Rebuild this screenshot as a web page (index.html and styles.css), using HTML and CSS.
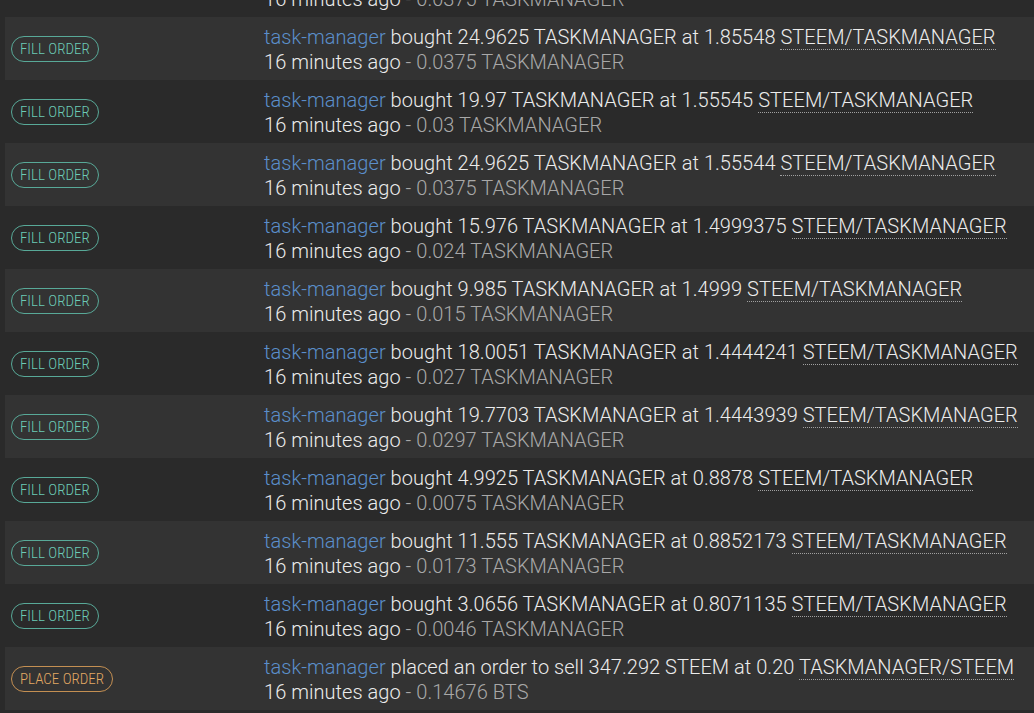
FILE: index.html
```html
<!DOCTYPE html>
<html lang="en">
<head>
    <meta charset="UTF-8">
    <meta name="viewport" content="width=device-width, initial-scale=1.0">
    <title>Recent activity</title>
    <link rel="stylesheet" href="styles.css">
</head>
<body>
    <div class="activity">
        <div class="row">
            <div class="type"><span class="badge fill">Fill order</span></div>
            <div class="info">
                <div><a class="account">task-manager</a> bought 24.9625 TASKMANAGER at 1.85548 <span class="pair">STEEM/TASKMANAGER</span></div>
                <div>16 minutes ago <span class="fee">- 0.0375 TASKMANAGER</span></div>
            </div>
        </div>
        <div class="row">
            <div class="type"><span class="badge fill">Fill order</span></div>
            <div class="info">
                <div><a class="account">task-manager</a> bought 24.9625 TASKMANAGER at 1.85548 <span class="pair">STEEM/TASKMANAGER</span></div>
                <div>16 minutes ago <span class="fee">- 0.0375 TASKMANAGER</span></div>
            </div>
        </div>
        <div class="row">
            <div class="type"><span class="badge fill">Fill order</span></div>
            <div class="info">
                <div><a class="account">task-manager</a> bought 19.97 TASKMANAGER at 1.55545 <span class="pair">STEEM/TASKMANAGER</span></div>
                <div>16 minutes ago <span class="fee">- 0.03 TASKMANAGER</span></div>
            </div>
        </div>
        <div class="row">
            <div class="type"><span class="badge fill">Fill order</span></div>
            <div class="info">
                <div><a class="account">task-manager</a> bought 24.9625 TASKMANAGER at 1.55544 <span class="pair">STEEM/TASKMANAGER</span></div>
                <div>16 minutes ago <span class="fee">- 0.0375 TASKMANAGER</span></div>
            </div>
        </div>
        <div class="row">
            <div class="type"><span class="badge fill">Fill order</span></div>
            <div class="info">
                <div><a class="account">task-manager</a> bought 15.976 TASKMANAGER at 1.4999375 <span class="pair">STEEM/TASKMANAGER</span></div>
                <div>16 minutes ago <span class="fee">- 0.024 TASKMANAGER</span></div>
            </div>
        </div>
        <div class="row">
            <div class="type"><span class="badge fill">Fill order</span></div>
            <div class="info">
                <div><a class="account">task-manager</a> bought 9.985 TASKMANAGER at 1.4999 <span class="pair">STEEM/TASKMANAGER</span></div>
                <div>16 minutes ago <span class="fee">- 0.015 TASKMANAGER</span></div>
            </div>
        </div>
        <div class="row">
            <div class="type"><span class="badge fill">Fill order</span></div>
            <div class="info">
                <div><a class="account">task-manager</a> bought 18.0051 TASKMANAGER at 1.4444241 <span class="pair">STEEM/TASKMANAGER</span></div>
                <div>16 minutes ago <span class="fee">- 0.027 TASKMANAGER</span></div>
            </div>
        </div>
        <div class="row">
            <div class="type"><span class="badge fill">Fill order</span></div>
            <div class="info">
                <div><a class="account">task-manager</a> bought 19.7703 TASKMANAGER at 1.4443939 <span class="pair">STEEM/TASKMANAGER</span></div>
                <div>16 minutes ago <span class="fee">- 0.0297 TASKMANAGER</span></div>
            </div>
        </div>
        <div class="row">
            <div class="type"><span class="badge fill">Fill order</span></div>
            <div class="info">
                <div><a class="account">task-manager</a> bought 4.9925 TASKMANAGER at 0.8878 <span class="pair">STEEM/TASKMANAGER</span></div>
                <div>16 minutes ago <span class="fee">- 0.0075 TASKMANAGER</span></div>
            </div>
        </div>
        <div class="row">
            <div class="type"><span class="badge fill">Fill order</span></div>
            <div class="info">
                <div><a class="account">task-manager</a> bought 11.555 TASKMANAGER at 0.8852173 <span class="pair">STEEM/TASKMANAGER</span></div>
                <div>16 minutes ago <span class="fee">- 0.0173 TASKMANAGER</span></div>
            </div>
        </div>
        <div class="row">
            <div class="type"><span class="badge fill">Fill order</span></div>
            <div class="info">
                <div><a class="account">task-manager</a> bought 3.0656 TASKMANAGER at 0.8071135 <span class="pair">STEEM/TASKMANAGER</span></div>
                <div>16 minutes ago <span class="fee">- 0.0046 TASKMANAGER</span></div>
            </div>
        </div>
        <div class="row">
            <div class="type"><span class="badge place">Place order</span></div>
            <div class="info">
                <div><a class="account">task-manager</a> placed an order to sell 347.292 STEEM at 0.20 <span class="pair">TASKMANAGER/STEEM</span></div>
                <div>16 minutes ago <span class="fee">- 0.14676 BTS</span></div>
            </div>
        </div>
        <div class="row">
            <div class="type"><span class="badge place">Place order</span></div>
            <div class="info">
                <div><a class="account">task-manager</a> placed an order to sell 347.292 STEEM at 0.20 <span class="pair">TASKMANAGER/STEEM</span></div>
                <div>16 minutes ago <span class="fee">- 0.14676 BTS</span></div>
            </div>
        </div>
    </div>
</body>
</html>
```

FILE: styles.css
```css
body {
    margin: 0;
    padding: 0 0 0 5px;
    background-color: #2a2a2a;
    color: #ececec;
    font-family: Roboto, "Liberation Sans", sans-serif;
    font-weight: 300;
    overflow: hidden;
}

/* list is scrolled, first row is cut off */
.activity {
    margin-top: -46px;
}

.row {
    display: grid;
    grid-template-columns: 259px 1fr;
    align-items: center;
    height: 63px;
}

.row:nth-child(even) {
    background-color: #333333;
}

.type {
    padding-left: 6px;
}

.badge {
    display: inline-block;
    height: 24px;
    line-height: 25px;
    padding: 0 8px;
    border: 1px solid;
    border-radius: 13px;
    font-family: "Roboto Condensed", "DejaVu Sans Condensed", sans-serif;
    font-size: 15px;
    font-weight: 300;
    text-transform: uppercase;
}

.badge.fill {
    color: #6ccab6;
    border-color: #58a998;
}

.badge.place {
    color: #e2a863;
    border-color: #c48f52;
}

.info {
    font-size: 20px;
    line-height: 25px;
    padding-top: 2px;
    letter-spacing: 0.04px;
    white-space: nowrap;
}

.account {
    color: #5b8fcb;
    cursor: pointer;
}

.pair {
    border-bottom: 1px dotted #a0a0a0;
}

.fee {
    color: #a8a8a8;
}
```
